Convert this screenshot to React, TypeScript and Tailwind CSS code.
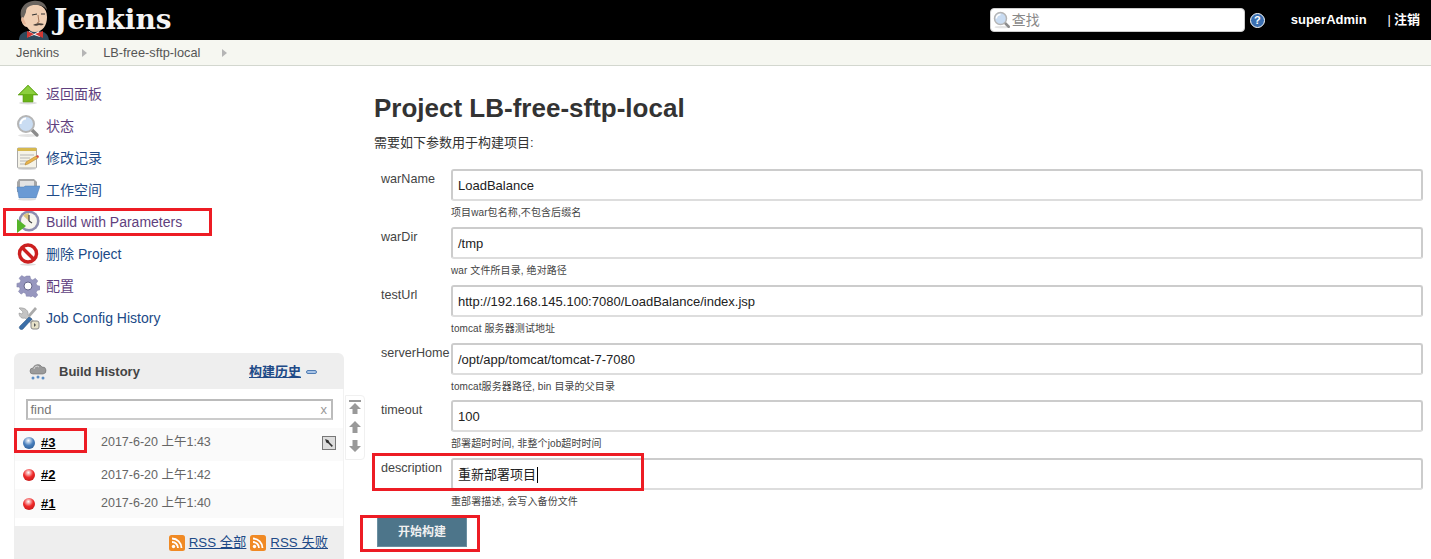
import React from 'react';

const cjk = '"Liberation Sans", "Noto Sans CJK SC", sans-serif';

const ButlerLogo = () => (
  <svg width="34" height="40" viewBox="0 0 34 40">
    <path d="M2 40c0-6 4-8 9-9h12c5 1 8 3 9 9z" fill="#2f4a5c" />
    <path d="M12 31l5 3 5-3 1 6-6-2-6 2z" fill="#fff" />
    <path d="M10 31l7 3-7 4zM26 31l-8 3 8 4z" fill="#d33833" />
    <path d="M4 16C4 7 8 4 15 4c8 0 15 3 15 13 0 8-4 15-12 15-4 0-6-2-8-5-3 0-6-4-6-11z" fill="#f0cfb4" />
    <path d="M5 20C1 10 7 2 16 1c7-1 13 2 14 9-3-4-6-5-12-5-5 0-9 2-9 7-1 3-2 5-4 8z" fill="#6b6560" />
    <path d="M6 17c-2 0-2 3-1 5 1 2 3 3 4 2z" fill="#e5b598" />
    <path d="M15 15l5-1M24 14l4 0" stroke="#333" strokeWidth="1.2" fill="none" />
    <path d="M21 15l1 7-2 1" stroke="#a8795c" strokeWidth="1" fill="none" />
    <path d="M16 25c3-2 8-2 11-1-2 2-3 1-5 1-2 1-4 1-6 0z" fill="#4a413b" />
  </svg>
);

const UpIcon = () => (
  <svg width="24" height="24" viewBox="0 0 24 24">
    <ellipse cx="12" cy="21" rx="9" ry="1.5" fill="#ddd" />
    <path d="M12 3l10 10h-5v7H7v-7H2z" fill="#69b318" stroke="#5a9a14" strokeWidth=".6" />
    <path d="M12 4l8 8H4z" fill="#8ccf3e" />
  </svg>
);

const SearchIcon = ({ size = 24 }: { size?: number }) => (
  <svg width={size} height={size} viewBox="0 0 24 24">
    <ellipse cx="12" cy="21.5" rx="10" ry="1.5" fill="#e4e4e4" />
    <path d="M15 15l6 6" stroke="#8c8c8c" strokeWidth="3.4" strokeLinecap="round" />
    <circle cx="10" cy="10" r="8" fill="#c9dcf2" stroke="#b5b5b5" strokeWidth="2" />
    <path d="M4.500 10a5.500 5.500 0 0 1 5.500-5.500" stroke="#fff" strokeWidth="2" fill="none" />
  </svg>
);

const NotepadIcon = () => (
  <svg width="24" height="24" viewBox="0 0 24 24">
    <ellipse cx="11" cy="23" rx="9" ry="1" fill="#ddd" />
    <rect x="1.500" y="2" width="19" height="20" rx="1" fill="#f5f3e8" stroke="#aaa" />
    <rect x="1.500" y="2" width="19" height="3" fill="#d6b84e" />
    <path d="M4 9h14M4 12h10M4 15h8M4 18h6" stroke="#b5b5b5" />
    <path d="M9 19l1-3 10-6 2 2-10 6z" fill="#e9b44c" stroke="#a87a24" strokeWidth=".5" />
    <path d="M20 10l2 2 1-1-1-2z" fill="#d9453a" />
  </svg>
);

const FolderIcon = () => (
  <svg width="24" height="24" viewBox="0 0 24 24">
    <path d="M1 4l2-3h15l3 3v10H1z" fill="#a6a6a6" />
    <path d="M4 3h14v8H4z" fill="#e3e3e3" />
    <path d="M3 20L1 9h7l1-1h15l-4 12z" fill="#6a9ad4" stroke="#4f7cb3" strokeWidth=".5" />
    <ellipse cx="11" cy="21.500" rx="9" ry="1" fill="#ddd" />
  </svg>
);

const ClockPlayIcon = () => (
  <svg width="24" height="24" viewBox="0 0 24 24">
    <circle cx="13" cy="11" r="10.500" fill="#8d8daf" />
    <circle cx="13" cy="11" r="8" fill="#f7f5ee" />
    <path d="M13 11L7 5.500A8 8 0 0 1 13 3z" fill="#dcc67e" />
    <path d="M13 11V5M13 11l3 2" stroke="#444" strokeWidth="1.200" />
    <path d="M1 9l9 7-9 7z" fill="#55b52a" />
  </svg>
);

const NoIcon = () => (
  <svg width="24" height="24" viewBox="0 0 24 24">
    <ellipse cx="12" cy="22.500" rx="8" ry="1.200" fill="#ddd" />
    <circle cx="12" cy="11.500" r="8.500" fill="#fff" stroke="#cc2020" strokeWidth="3.400" />
    <path d="M6 5.500l12 12" stroke="#cc2020" strokeWidth="3.400" />
  </svg>
);

const GearIcon = () => (
  <svg width="24" height="24" viewBox="0 0 24 24">
    <path
      d="M10 1h4l.7 3.200 2.300 1 2.800-1.700 2.700 2.800-1.800 2.700 1 2.300 3.100.7v4l-3.100.7-1 2.300 1.800 2.700-2.800 2.800-2.700-1.800-2.300 1L14 23h-4l-.7-3.100-2.300-1-2.700 1.800-2.800-2.800 1.800-2.700-1-2.300L-.2 13V9l3.200-.7 1-2.300-1.800-2.700 2.800-2.800L7.700 2.200 10 1.300z"
      fill="#9797bf"
      stroke="#7a7aa2"
      strokeWidth=".5"
      transform="translate(1.100 1.100) scale(.92)"
    />
    <circle cx="12" cy="12" r="4" fill="#fff" stroke="#66668a" />
  </svg>
);

const ToolsIcon = () => (
  <svg width="24" height="24" viewBox="0 0 24 24">
    <path d="M3 2l4 4-1 2-3-1c0 4 3 6 6 5l10 9 2-2-9-10c1-4-3-8-9-7z" fill="#c4c4c4" stroke="#888" strokeWidth=".5" />
    <path d="M21 3l-7 8-2-2 7-8z" fill="#aaa" />
    <path d="M13 11l-9 9a2 2 0 0 0 3 3l9-10z" fill="#3a6ea8" stroke="#26507d" strokeWidth=".5" />
    <rect x="15" y="15" width="8" height="8" rx="2" fill="#e6e1c8" stroke="#888" />
    <path d="M18 17l2 2-2 2z" fill="#555" />
  </svg>
);

const CloudRainIcon = () => (
  <svg width="18" height="18" viewBox="0 0 18 18">
    <path d="M4 11a3 3 0 0 1 0-6 5 5 0 0 1 9-1 3.500 3.500 0 0 1 1 7z" fill="#9a9a9a" stroke="#6e6e6e" strokeWidth=".6" />
    <path d="M5 6a3 3 0 0 1 5-2" stroke="#d7d7d7" fill="none" />
    <circle cx="4" cy="15" r="1.500" fill="#5f8fc4" />
    <circle cx="9" cy="14" r="1.500" fill="#5f8fc4" />
    <circle cx="14" cy="15" r="1.500" fill="#5f8fc4" />
  </svg>
);

const Ball = ({ color, dark }: { color: string; dark: string }) => (
  <span
    className="inline-block w-3 h-3 rounded-full shrink-0"
    style={{ background: `radial-gradient(circle at 45% 30%, #ffffff 0%, ${color} 45%, ${dark} 100%)` }}
  />
);

const RssIcon = () => (
  <svg width="16" height="16" viewBox="0 0 16 16" className="shrink-0">
    <rect width="16" height="16" rx="2.500" fill="#f08a24" />
    <circle cx="4.500" cy="11.500" r="1.700" fill="#fff" />
    <path d="M3 7a6 6 0 0 1 6 6M3 3.500A9.500 9.500 0 0 1 12.500 13" stroke="#fff" strokeWidth="1.800" fill="none" />
  </svg>
);

const sideItems = [
  { label: '返回面板', icon: <UpIcon />, color: 'text-[#5f3f7e]' },
  { label: '状态', icon: <SearchIcon />, color: 'text-[#5f3f7e]' },
  { label: '修改记录', icon: <NotepadIcon />, color: 'text-[#204a87]' },
  { label: '工作空间', icon: <FolderIcon />, color: 'text-[#204a87]' },
  { label: 'Build with Parameters', icon: <ClockPlayIcon />, color: 'text-[#5f3f7e]' },
  { label: '删除 Project', icon: <NoIcon />, color: 'text-[#204a87]' },
  { label: '配置', icon: <GearIcon />, color: 'text-[#5f3f7e]' },
  { label: 'Job Config History', icon: <ToolsIcon />, color: 'text-[#204a87]' },
];

const params = [
  { name: 'warName', value: 'LoadBalance', help: '项目war包名称,不包含后缀名', h: 'h-[58px]' },
  { name: 'warDir', value: '/tmp', help: 'war 文件所目录, 绝对路径', h: 'h-[58px]' },
  { name: 'testUrl', value: 'http://192.168.145.100:7080/LoadBalance/index.jsp', help: 'tomcat 服务器测试地址', h: 'h-[58px]' },
  { name: 'serverHome', value: '/opt/app/tomcat/tomcat-7-7080', help: 'tomcat服务器路径, bin 目录的父目录', h: 'h-[57px]' },
  { name: 'timeout', value: '100', help: '部署超时时间, 非整个job超时时间', h: 'h-[58px]' },
  { name: 'description', value: '重新部署项目', help: '重部署描述, 会写入备份文件', h: 'h-[58px]' },
];

const builds = [
  { n: '#3', date: '2017-6-20 上午1:43', blue: true, bg: 'bg-[#fafafa] pb-[4px]', h: 'h-[33px]' },
  { n: '#2', date: '2017-6-20 上午1:42', blue: false, bg: 'bg-white', h: 'h-[28px]' },
  { n: '#1', date: '2017-6-20 上午1:40', blue: false, bg: 'bg-[#fafafa]', h: 'h-[29px]' },
];

const App: React.FC = () => {
  return (
    <div className="relative w-[1431px] h-[559px] overflow-hidden bg-white text-[#333]" style={{ fontFamily: cjk }}>
      {/* header */}
      <div className="h-10 bg-black flex items-center">
        <div className="ml-[17px] w-[34px] h-10">
          <ButlerLogo />
        </div>
        <span className="ml-[3px] text-[28px] leading-10 font-bold text-[#f4f4f4]" style={{ fontFamily: '"DejaVu Serif", serif' }}>
          Jenkins
        </span>
        <div className="ml-auto flex items-center">
          <div className="w-[255px] h-[24px] rounded bg-white border border-[#ccc] flex items-center pl-[2px]">
            <SearchIcon size={18} />
            <span className="ml-px text-[14px] text-[#888]">查找</span>
          </div>
          <span className="ml-[5px] w-[15px] h-[15px] rounded-full bg-[#3b6fb0] border border-white text-white text-[11px] leading-[13px] font-bold text-center">?</span>
          <span className="ml-[26px] text-[13px] font-bold text-white">superAdmin</span>
          <span className="ml-[21px] text-[13px] text-white">|</span>
          <span className="ml-[3px] mr-[11px] text-[13px] font-bold text-white">注销</span>
        </div>
      </div>

      {/* breadcrumb */}
      <div className="h-[26px] bg-[#f6f7f1] border-b border-[#d3d7cf] flex items-center text-[12.750px] text-[#555]">
        <span className="ml-4">Jenkins</span>
        <span className="ml-[23px] w-0 h-0 border-y-[4px] border-y-transparent border-l-[5px] border-l-[#b5b5b5]" />
        <span className="ml-[16px]">LB-free-sftp-local</span>
        <span className="ml-[22px] w-0 h-0 border-y-[4px] border-y-transparent border-l-[5px] border-l-[#b5b5b5]" />
      </div>

      <div className="flex">
        {/* side panel */}
        <div className="w-[374px] shrink-0 pt-3">
          <div className="pl-[16px]">
            {sideItems.map((item) => (
              <div key={item.label} className="h-8 flex items-center">
                <span className="w-6 h-6 shrink-0">{item.icon}</span>
                <span className={`ml-[6px] text-[14px] ${item.color}`}>{item.label}</span>
              </div>
            ))}
          </div>

          <div className="relative ml-[14px] mt-[19px] w-[330px]">
            <div className="h-9 bg-[#eee] rounded-t-md flex items-center pl-[15px] pr-[27px] pt-px text-[13px]">
              <CloudRainIcon />
              <span className="ml-[12px] font-bold text-[#444]">Build History</span>
              <span className="ml-auto font-bold text-[#204a87] underline">构建历史</span>
              <span className="ml-[5px] w-[11px] h-[4px] rounded-sm bg-[#a9c4e6] border border-[#4f7cb3]" />
            </div>
            <div className="bg-white pt-[10px] border-x border-[#f2f2f2]">
              <div className="ml-[10.500px] mr-[10px] h-[21px] border-2 border-[#bbb] border-b-[#ccc] flex items-center justify-between px-[3px] pt-px text-[13px] text-[#777]">
                <span>find</span>
                <span className="text-[#999] text-[13px] mr-px">x</span>
              </div>
              <div className="mt-2">
                {builds.map((b) => (
                  <div key={b.n} className={`${b.h} ${b.bg} flex items-center pl-[8px] relative`}>
                    {b.blue ? <Ball color="#4a80bd" dark="#1f4f86" /> : <Ball color="#ef2929" dark="#b01515" />}
                    <span className="ml-[6px] w-[60px] text-[13px] font-bold text-black underline">{b.n}</span>
                    <span className="text-[12.500px] text-[#666]">{b.date}</span>
                    {b.blue && (
                      <span className="absolute right-[7px] top-[8px] w-[14px] h-[14px] border border-[#777] bg-[#ddd] flex items-center justify-center text-[#333]">
                        <svg width="10" height="10" viewBox="0 0 9 9">
                          <path d="M1 1l3 1 1 2 3 3-1 1-3-3-2-1z" fill="#333" />
                        </svg>
                      </span>
                    )}
                  </div>
                ))}
              </div>
              <div className="h-[8px]" />
            </div>
            <div className="h-[33px] bg-[#eee] flex items-center justify-end pr-[16px] text-[13.300px] text-[#204a87]">
              <RssIcon />
              <span className="ml-[4px] underline">RSS 全部</span>
              <span className="ml-1"><RssIcon /></span>
              <span className="ml-[4px] underline">RSS 失败</span>
            </div>
            {/* page scroller */}
            <div className="absolute left-[331px] top-[42px] w-[20px] h-[65px] bg-white border border-[#f0f0f0] rounded-r flex flex-col items-center justify-around pb-[3px]">
              <svg width="12" height="14" viewBox="0 0 12 14">
                <path d="M0 0h12v2H0zM6 3l6 6H8.500v5h-5V9H0z" fill="#999" />
              </svg>
              <svg width="12" height="12" viewBox="0 0 12 12">
                <path d="M6 0l6 6H8.500v6h-5V6H0z" fill="#999" />
              </svg>
              <svg width="12" height="12" viewBox="0 0 12 12">
                <path d="M6 12l6-6H8.500V0h-5v6H0z" fill="#999" />
              </svg>
            </div>
          </div>
        </div>

        {/* main */}
        <div className="flex-1 pr-2">
          <h1 className="mt-[26px] text-[26px] leading-[32px] font-bold text-[#333]">Project LB-free-sftp-local</h1>
          <p className="mt-[10px] text-[13px] leading-[18px] text-[#333]">需要如下参数用于构建项目:</p>
          <div className="mt-[17px]">
            {params.map((p) => (
              <div key={p.name} className={`flex ${p.h}`}>
                <div className="w-[77px] pl-[7px] pt-[1px] text-[12.600px] leading-[18px] text-[#444]">{p.name}</div>
                <div className="flex-1">
                  <div className="h-8 border-2 border-[#ccc] border-b-[#ddd] rounded-[3px] bg-white flex items-center pl-[5px] pt-px text-[13px] text-[#222]">
                    {p.value}
                    {p.name === 'description' && <span className="ml-px w-px h-4 bg-black" />}
                  </div>
                  <div className="mt-[5px] text-[10px] leading-[14px] tracking-[0.1px] text-[#444]">{p.help}</div>
                </div>
              </div>
            ))}
          </div>
          <button className="ml-[3px] w-[90px] h-[31px] bg-[#4d758a] border border-[#6b8fa1] text-[12px] font-bold text-[#f0f0f0]">
            开始构建
          </button>
        </div>
      </div>

      {/* red annotation boxes */}
      <div className="absolute left-[3px] top-[208px] w-[209px] h-[28px] border-[3px] border-[#ed1c24]" />
      <div className="absolute left-[14px] top-[428px] w-[73px] h-[25px] border-[3px] border-[#ed1c24]" />
      <div className="absolute left-[372px] top-[453px] w-[272px] h-[38px] border-[3px] border-[#ed1c24]" />
      <div className="absolute left-[360px] top-[515px] w-[120px] h-[37px] border-[3px] border-[#ed1c24]" />
    </div>
  );
};

export default App;
